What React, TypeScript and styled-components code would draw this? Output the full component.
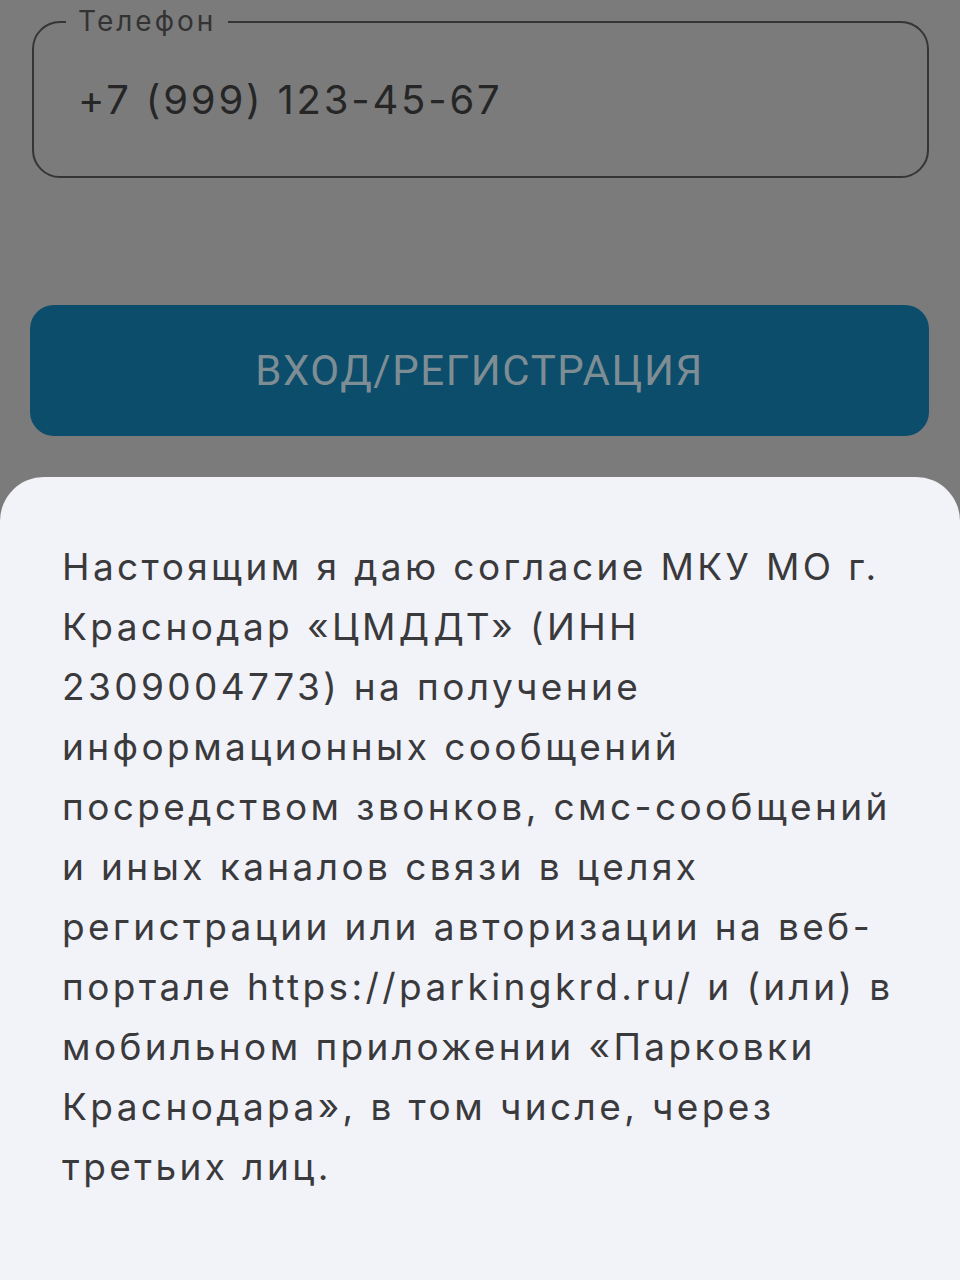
import React from 'react';
import styled, { createGlobalStyle } from 'styled-components';

const GlobalStyle = createGlobalStyle`
  html, body {
    margin: 0;
    padding: 0;
    background: #7b7b7b;
  }
  body {
    font-family: Inter, "Noto Sans", sans-serif;
  }
`;

const Screen = styled.div`
  width: 960px;
  height: 1280px;
  background: #7b7b7b;
  display: flex;
  flex-direction: column;
  overflow: hidden;
`;

const Form = styled.div`
  padding: 21px 31px 0 32px;
  display: flex;
  flex-direction: column;
`;

const Field = styled.div`
  height: 157px;
  box-sizing: border-box;
  border: 2px solid #353535;
  border-radius: 28px;
  padding: 0 0 0 44px;
  display: flex;
  align-items: center;
  position: relative;
`;

const Label = styled.span`
  position: absolute;
  top: -18px;
  left: 32px;
  padding: 0 12px;
  background: #7b7b7b;
  font-size: 28px;
  letter-spacing: 3px;
  color: #333;
  line-height: 32px;
`;

const Value = styled.div`
  font-size: 40px;
  letter-spacing: 2.8px;
  color: #262626;
`;

const Submit = styled.button`
  margin-top: 127px;
  margin-left: -2px;
  height: 131px;
  border: none;
  border-radius: 24px;
  background: #0b4d6b;
  color: #7e8d94;
  font-family: Roboto, sans-serif;
  font-size: 42px;
  font-weight: 400;
  letter-spacing: 1.6px;
  display: flex;
  align-items: center;
  justify-content: center;
`;

const Sheet = styled.div`
  margin-top: 41px;
  flex: 1;
  background: #f2f2f9;
  border-radius: 44px 44px 0 0;
  padding: 60px 30px 0 62px;
`;

const Consent = styled.p`
  margin: 0;
  font-size: 37px;
  line-height: 60px;
  letter-spacing: 3.4px;
  color: #3a3a3c;
  white-space: nowrap;
`;

const lines = [
  'Настоящим я даю согласие МКУ МО г.',
  'Краснодар «ЦМДДТ» (ИНН',
  '2309004773) на получение',
  'информационных сообщений',
  'посредством звонков, смс-сообщений',
  'и иных каналов связи в целях',
  'регистрации или авторизации на веб-',
  'портале https://parkingkrd.ru/ и (или) в',
  'мобильном приложении «Парковки',
  'Краснодара», в том числе, через',
  'третьих лиц.',
];

export default function App() {
  return (
    <Screen>
      <GlobalStyle />
      <Form>
        <Field>
          <Label>Телефон</Label>
          <Value>+7 (999) 123-45-67</Value>
        </Field>
        <Submit>ВХОД/РЕГИСТРАЦИЯ</Submit>
      </Form>
      <Sheet>
        <Consent>
          {lines.map((l, i) => (
            <React.Fragment key={i}>
              {l}
              {i < lines.length - 1 && <br />}
            </React.Fragment>
          ))}
        </Consent>
      </Sheet>
    </Screen>
  );
}
